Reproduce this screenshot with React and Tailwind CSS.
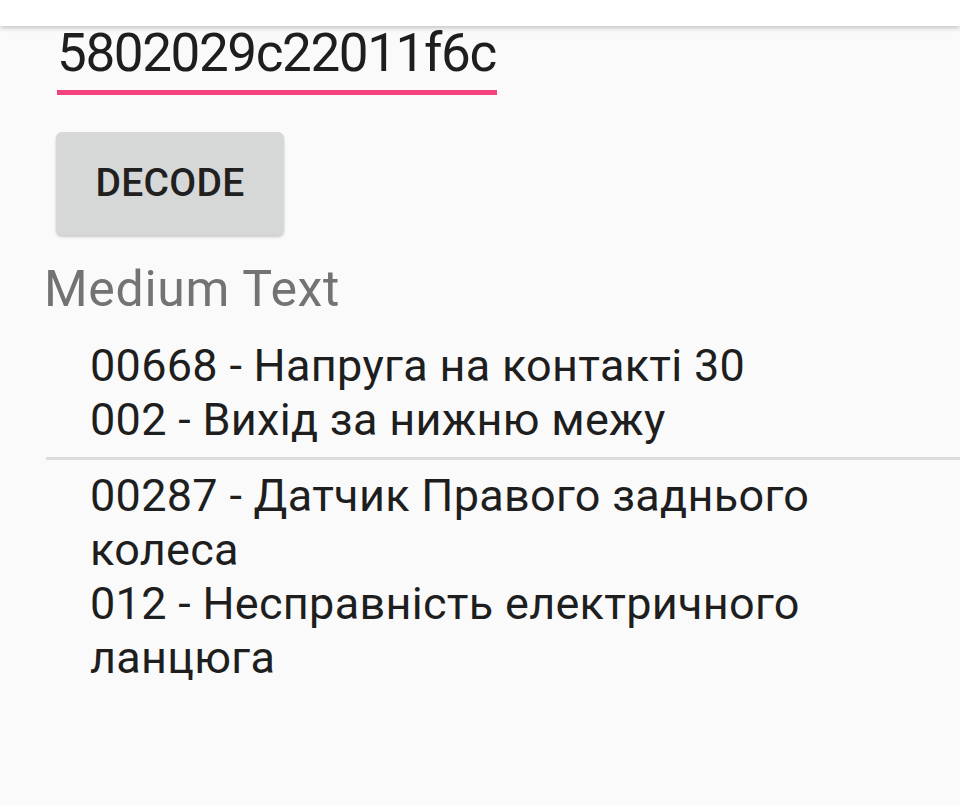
export default function App() {
    const items = [
        ['00668 - Напруга на контакті 30', '002 - Вихід за нижню межу'],
        ['00287 - Датчик Правого заднього колеса', '012 - Несправність електричного ланцюга'],
    ];

    return (
        <div className="min-h-screen bg-[#fafafa] overflow-hidden" style={{ fontFamily: 'Roboto, "Noto Sans", sans-serif' }}>
            {/* action bar edge */}
            <div className="relative z-10 h-[26px] bg-white shadow-[0_2px_5px_rgba(0,0,0,0.22)]" />

            {/* edit text */}
            <div className="ml-[57px] w-[440px] -mt-[3px]">
                <div className="text-[53px] leading-[61px] text-[#1e1e1e] tracking-[-1.4px]">5802029c22011f6c</div>
                <div className="mt-[6px] h-[5px] bg-[#f2437f]" />
            </div>

            {/* button */}
            <button className="ml-[56px] mt-[37px] w-[228px] h-[103px] rounded-[6px] bg-[#d6d7d7] shadow-[0_2px_3px_rgba(0,0,0,0.2)] text-[39px] font-medium text-[#202020] tracking-[0.3px]">
                DECODE
            </button>

            <div className="pl-[46px]">
                <div className="mt-[26px] -ml-[2px] text-[50px] leading-[57px] text-[#737373] tracking-[0.7px]">Medium Text</div>

                <div className="mt-[12px]">
                    {items.map((lines, i) => (
                        <div key={i}>
                            {i > 0 && <div className="h-[3px] bg-[#dcdcdc]" />}
                            <div className="pt-[9px] pb-[10px] pl-[44px] pr-[46px] text-[45px] leading-[54px] text-[#1e1e1e] tracking-[0.3px]">
                                {lines.map((l, j) => (
                                    <div key={j}>{l}</div>
                                ))}
                            </div>
                        </div>
                    ))}
                </div>
            </div>
        </div>
    );
}
